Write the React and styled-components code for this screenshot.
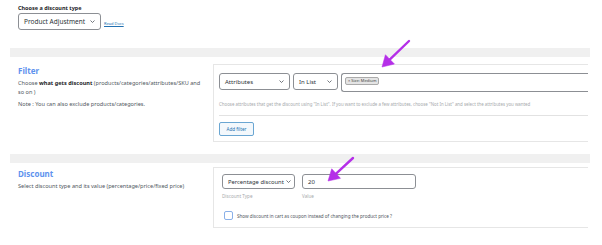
import React from "react";
import styled, { createGlobalStyle } from "styled-components";

const Global = createGlobalStyle`
  html, body {
    margin: 0;
    padding: 0;
    background: #fff;
    font-family: "Noto Sans", "Open Sans", sans-serif;
    color: #3c434a;
  }
`;

const Page = styled.div`
  position: relative;
  width: 602px;
  height: 245px;
  overflow: hidden;
`;

const Top = styled.div`
  padding: 5px 0 0 18px;
  height: 48px;
  box-sizing: border-box;
`;

const TopLabel = styled.div`
  font-size: 5.5px;
  font-weight: 700;
  color: #1d2327;
  line-height: 7px;
`;

const TopRow = styled.div`
  display: flex;
  align-items: flex-end;
  gap: 3px;
  margin-top: 1px;
`;

const Select = styled.div`
  display: flex;
  align-items: center;
  justify-content: space-between;
  box-sizing: border-box;
  width: ${(p) => p.$w}px;
  height: ${(p) => p.$h}px;
  padding: 0 5px 0 5px;
  border: 1px solid #8c8f94;
  border-radius: 3px;
  background: #fff;
  font-size: ${(p) => p.$fs || 6.5}px;
  color: #2c3338;
  white-space: nowrap;
  overflow: hidden;
`;

const Chevron = () => (
  <svg width="5" height="3" viewBox="0 0 5 3" style={{ flexShrink: 0, marginLeft: 2 }}>
    <path d="M0.5 0.5 L2.5 2.5 L4.5 0.5" fill="none" stroke="#50575e" strokeWidth="0.8" />
  </svg>
);

const DocLink = styled.a`
  font-size: 4px;
  color: #2271b1;
  text-decoration: underline;
  margin-bottom: 4px;
`;

const Band = styled.div`
  margin-left: 10px;
  width: 580px;
  height: 9px;
  background: #f0f0f0;
`;

const Section = styled.div`
  display: grid;
  grid-template-columns: 203px 375px;
  margin-left: 10px;
  padding-top: ${(p) => p.$pt}px;
  height: ${(p) => p.$h}px;
  box-sizing: border-box;
`;

const Info = styled.div`
  padding: 2px 10px 0 8px;
`;

const Heading = styled.div`
  font-size: 8px;
  font-weight: 700;
  color: #5e92ee;
  line-height: 10px;
  margin-bottom: 3px;
`;

const Text = styled.p`
  margin: 0 0 3px;
  font-size: 5.6px;
  line-height: 9px;
  color: #50575e;
  b {
    color: #1d2327;
  }
`;

const Panel = styled.div`
  border: 1px solid #e6e6e6;
  border-right: none;
  background: #fff;
  padding: ${(p) => p.$pad};
  box-sizing: border-box;
  height: ${(p) => p.$h}px;
`;

const FieldRow = styled.div`
  display: flex;
  gap: ${(p) => p.$gap || 3}px;
`;

const Multi = styled.div`
  flex: 1;
  display: flex;
  align-items: flex-start;
  height: 19px;
  box-sizing: border-box;
  border: 1px solid #8c8f94;
  border-right: none;
  border-radius: 3px 0 0 3px;
  padding: 3px 3px;
  font-size: 4px;
  line-height: 6px;
`;

const Tag = styled.span`
  font-size: 4px;
  line-height: 6px;
  padding: 0 2px;
  background: #e4e4e4;
  border: 1px solid #aaa;
  border-radius: 2px;
  color: #444;
  white-space: nowrap;
`;

const Help = styled.div`
  font-size: 4.4px;
  color: #a7aaad;
  margin-top: 9px;
  white-space: nowrap;
  line-height: 6px;
`;

const Divider = styled.div`
  height: 1px;
  background: #e2e2e2;
  margin: 8px 0 6px;
`;

const Button = styled.button`
  display: block;
  font-family: inherit;
  font-size: 4.6px;
  color: #2271b1;
  background: #f3f8fc;
  border: 1px solid #6aa6d2;
  border-radius: 2px;
  width: 35px;
  height: 14px;
  padding: 0;
`;

const Field = styled.div`
  display: flex;
  flex-direction: column;
`;

const Input = styled.div`
  box-sizing: border-box;
  width: ${(p) => p.$w}px;
  height: 15px;
  border: 1px solid #8c8f94;
  border-radius: 3px;
  font-size: 6px;
  padding: 3px 5px;
  color: #2c3338;
  line-height: 8px;
`;

const SubLabel = styled.div`
  font-size: 4.6px;
  color: #a7aaad;
  margin-top: 4px;
`;

const CheckRow = styled.div`
  display: flex;
  align-items: center;
  gap: 4px;
  margin-top: 12px;
  margin-left: 2px;
`;

const Box = styled.div`
  width: 9px;
  height: 9px;
  box-sizing: border-box;
  border: 1px solid #8ab0e8;
  border-radius: 2px;
`;

const CheckText = styled.span`
  font-size: 4.6px;
  color: #50575e;
`;

const Arrows = styled.svg`
  position: absolute;
  left: 0;
  top: 0;
  pointer-events: none;
`;

const Arrow = ({ x1, y1, x2, y2 }) => {
  const dx = x2 - x1;
  const dy = y2 - y1;
  const len = Math.hypot(dx, dy);
  const ux = dx / len;
  const uy = dy / len;
  const hl = 11;
  const hw = 6.5;
  const bx = x2 - ux * hl;
  const by = y2 - uy * hl;
  const px = -uy;
  const py = ux;
  return (
    <g fill="#b52fe8" stroke="#b52fe8">
      <line x1={x1} y1={y1} x2={bx} y2={by} strokeWidth="2.4" strokeLinecap="round" />
      <polygon
        strokeWidth="0.5"
        points={`${x2},${y2} ${bx + px * hw},${by + py * hw} ${bx - px * hw},${by - py * hw}`}
      />
    </g>
  );
};

export default function App() {
  return (
    <Page>
      <Global />
      <Top>
        <TopLabel>Choose a discount type</TopLabel>
        <TopRow>
          <Select $w={83} $h={17} $fs={6.5}>
            Product Adjustment <Chevron />
          </Select>
          <DocLink>Read Docs</DocLink>
        </TopRow>
      </Top>
      <Band />
      <Section $pt={7} $h={97}>
        <Info>
          <Heading>Filter</Heading>
          <Text>
            Choose <b>what gets discount</b> (products/categories/attributes/SKU and so on )
          </Text>
          <Text>Note : You can also exclude products/categories.</Text>
        </Info>
        <Panel $pad="8px 0 4px 5px" $h={78}>
          <FieldRow>
            <Select $w={71} $h={17} $fs={6}>
              Attributes <Chevron />
            </Select>
            <Select $w={45} $h={17} $fs={6}>
              In List <Chevron />
            </Select>
            <Multi>
              <Tag>× Size: Medium</Tag>
            </Multi>
          </FieldRow>
          <Help>
            Choose attributes that get the discount using "In List". If you want to exclude a few attributes, choose "Not In List" and select the attributes you wanted
          </Help>
          <Divider />
          <Button>Add filter</Button>
        </Panel>
      </Section>
      <Band />
      <Section $pt={4} $h={70}>
        <Info>
          <Heading>Discount</Heading>
          <Text>Select discount type and its value (percentage/price/fixed price)</Text>
        </Info>
        <Panel $pad="6px 0 0 8px" $h={61}>
          <FieldRow $gap={7}>
            <Field>
              <Select $w={73} $h={15} $fs={5.8}>
                Percentage discount <Chevron />
              </Select>
              <SubLabel>Discount Type</SubLabel>
            </Field>
            <Field>
              <Input $w={114}>20</Input>
              <SubLabel>Value</SubLabel>
            </Field>
          </FieldRow>
          <CheckRow>
            <Box />
            <CheckText>Show discount in cart as coupon instead of changing the product price ?</CheckText>
          </CheckRow>
        </Panel>
      </Section>
      <Arrows width="602" height="245">
        <Arrow x1={409} y1={41} x2={382} y2={67} />
        <Arrow x1={353} y1={158} x2={328} y2={181} />
      </Arrows>
    </Page>
  );
}
